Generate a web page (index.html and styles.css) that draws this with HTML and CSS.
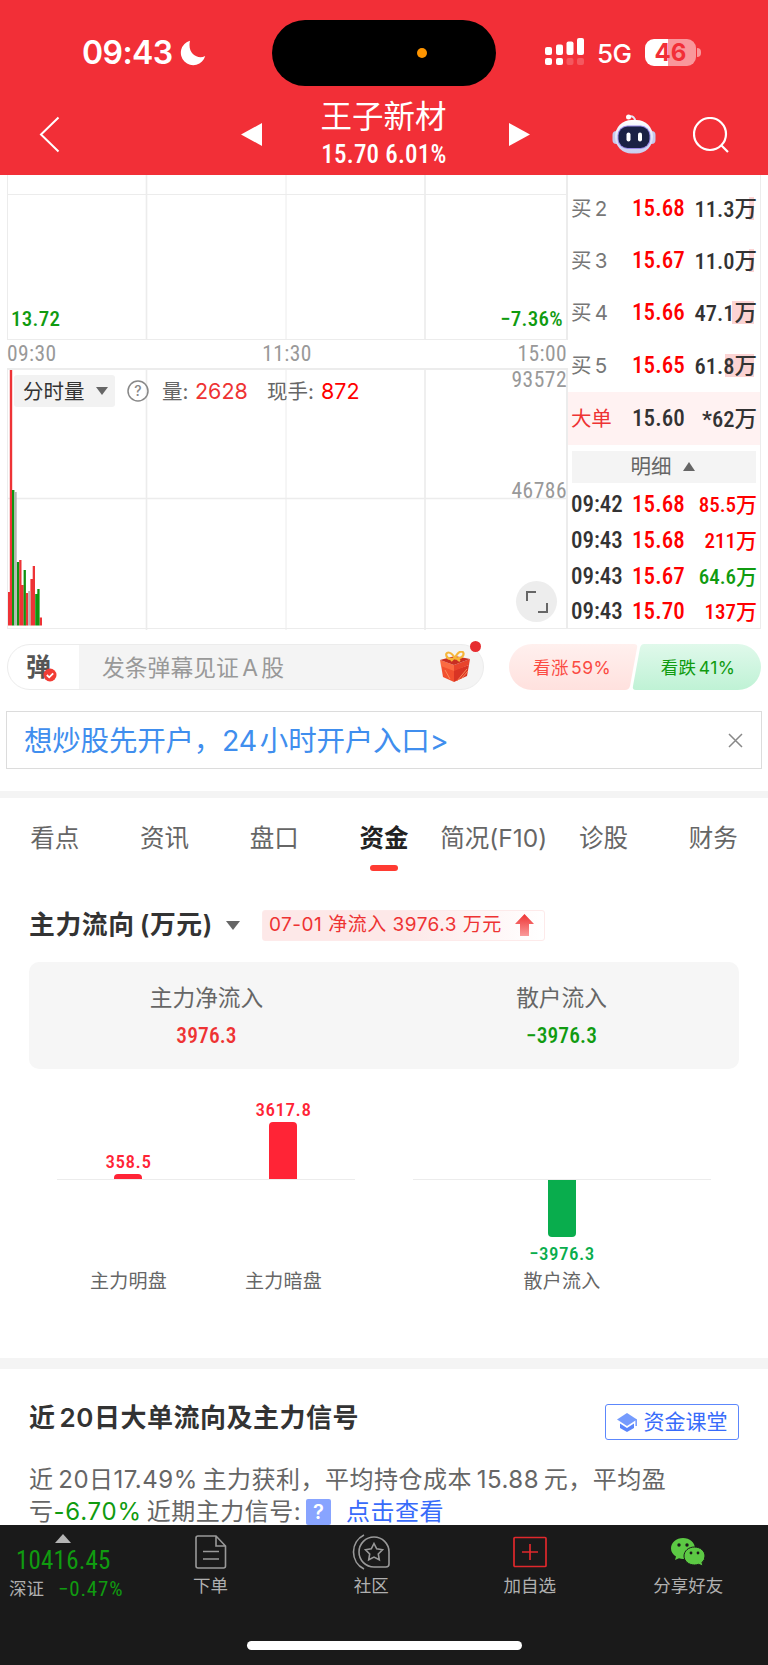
FILE: index.html
```html
<!DOCTYPE html>
<html lang="zh-CN">
<head>
  <meta charset="UTF-8">
  <meta name="viewport" content="width=device-width, initial-scale=1.0">
  <title>王子新材</title>
  <link rel="stylesheet" href="styles.css">
</head>
<body>
  <div class="app">
    <!-- Header -->
    <header class="header">
      <div class="status-bar">
        <div class="status-left">
          <span class="clock">09:43</span>
          <svg class="moon" width="26" height="26" viewBox="0 0 26 26"><path d="M10 .8A12.4 12.4 0 1 0 25.2 16C18 20 7 14 10 .8z" fill="#fff"/></svg>
        </div>
        <div class="island"><span class="island-dot"></span></div>
        <div class="status-right">
          <svg width="40" height="28" viewBox="0 0 40 28" fill="#fff">
            <rect x="0" y="9" width="7" height="8" rx="2"/><rect x="11" y="6.500" width="7" height="10.500" rx="2"/>
            <rect x="21.500" y="3.500" width="7" height="13.500" rx="2"/><rect x="32" y="0" width="7" height="17" rx="2"/>
            <rect x="0" y="20" width="7" height="7" rx="2"/><rect x="11" y="20" width="7" height="7" rx="2"/>
            <rect x="21.500" y="20" width="7" height="7" rx="2" opacity=".2"/><rect x="32" y="20" width="7" height="7" rx="2" opacity=".2"/>
          </svg>
          <span class="network">5G</span>
          <div class="battery">46</div>
          <span class="battery-nub"></span>
        </div>
      </div>
      <div class="nav-bar">
        <svg class="back" width="21" height="37" viewBox="0 0 21 37"><path d="M19.500 1.500L2 18.500l17.500 17" fill="none" stroke="#fff" stroke-width="2"/></svg>
        <svg class="prev" width="21" height="23" viewBox="0 0 21 23"><path d="M21 0v23L0 11.500z" fill="#fff"/></svg>
        <div class="stock">
          <div class="stock-name">王子新材</div>
          <div class="stock-price">15.70 6.01%</div>
        </div>
        <svg class="next" width="21" height="23" viewBox="0 0 21 23"><path d="M0 0v23l21-11.500z" fill="#fff"/></svg>
        <svg class="robot" width="44" height="40" viewBox="0 0 44 40">
          <defs><linearGradient id="shell" x2="0" y2="1"><stop stop-color="#fff"/><stop offset="1" stop-color="#c9cdef"/></linearGradient></defs>
          <path d="M17 2.500q6-1 6 5" fill="none" stroke="#e3e6f5" stroke-width="2"/>
          <circle cx="16.500" cy="3" r="2.500" fill="#fff"/>
          <rect x="0.500" y="17" width="8" height="13" rx="4" fill="#c5c9ec"/><rect x="35.500" y="17" width="8" height="13" rx="4" fill="#c5c9ec"/>
          <rect x="3" y="6" width="38" height="33.500" rx="16.500" fill="url(#shell)"/>
          <rect x="5.500" y="11.500" width="33" height="23.500" rx="10" fill="#9a8be8"/>
          <rect x="6.500" y="12.500" width="31" height="21.500" rx="9" fill="#1b2144"/>
          <rect x="14.500" y="18.500" width="4" height="9" rx="2" fill="#fff"/><rect x="26" y="18.500" width="4" height="9" rx="2" fill="#fff"/>
        </svg>
        <svg class="search" width="36" height="36" viewBox="0 0 36 36" fill="none" stroke="#fff" stroke-width="2.200"><circle cx="17" cy="17" r="16"/><path d="M28 28l7 7"/></svg>
      </div>
    </header>

    <!-- Chart and order book -->
    <section class="market">
      <div class="charts">
        <div class="price-chart">
          <svg class="grid" width="561" height="165" viewBox="0 0 561 165" fill="none" stroke="#ececec">
            <path d="M139.500 0v165M418 0v165" stroke-width="1.600"/><path d="M279 0v165M0 19.500h561"/>
          </svg>
          <span class="num low">13.72</span>
          <span class="num low">−7.36%</span>
        </div>
        <div class="time-axis num"><span>09:30</span><span>11:30</span><span>15:00</span></div>
        <div class="volume-chart">
          <svg class="grid" width="561" height="260" viewBox="0 0 561 260" fill="none" stroke="#ececec">
            <path d="M139.500 0v260M418 0v260M0 128.500h561" stroke-width="1.600"/><path d="M279 0v260"/>
            <g stroke="none" fill="#ee3336">
              <path d="M1 222h2v33.500H1zM2.800 0h2.400v255.500H2.800zM12.200 190h2.300v65.500h-2.300zM14.400 215h2.300v40.500h-2.300zM18.700 223h2.500v32.500h-2.500zM23.400 209h2.300v46.500h-2.300zM25.700 196h2.300v59.500h-2.300zM32.600 247.500h2.400v8h-2.400z"/>
              <path fill="#109410" d="M5 120h2.400v135.500H5zM9.700 192h2.400v63.500H9.700zM16.600 200h2.300v55.500h-2.300zM28.200 224h2.200v31.500h-2.200zM30.300 219h2.300v36.500h-2.300z"/>
              <path fill="#b5b5b5" d="M7.400 122h2.300v133.500H7.400zM21.200 221h2.200v34.500h-2.200z"/>
            </g>
          </svg>
          <div class="indicator">
            <span class="indicator-select">分时量<svg width="12" height="8" viewBox="0 0 12 8"><path d="M0 0h12L6 8z" fill="#666"/></svg></span>
            <svg class="help" width="22" height="22" viewBox="0 0 22 22"><circle cx="11" cy="11" r="10" fill="none" stroke="#888" stroke-width="1.500"/><text x="11" y="16" text-anchor="middle">?</text></svg>
            <span class="ind-label">量:</span><span class="ind-value vol">2628</span>
            <span class="ind-label">现手:</span><span class="ind-value hand">872</span>
          </div>
          <span class="num axis-max">93572</span>
          <span class="num axis-mid">46786</span>
          <span class="expand"><svg width="22" height="22" viewBox="0 0 22 22" fill="none" stroke="#666" stroke-width="2"><path d="M1 10V1h9M21 12v9h-9"/></svg></span>
        </div>
      </div>
      <div class="book">
        <div class="bid"><span>买 2</span><b class="num">15.68</b><i class="num d1">11.3万</i></div>
        <div class="bid"><span>买 3</span><b class="num">15.67</b><i class="num d1">11.0万</i></div>
        <div class="bid"><span>买 4</span><b class="num">15.66</b><i class="num d4">47.1万</i></div>
        <div class="bid"><span>买 5</span><b class="num">15.65</b><i class="num d5">61.8万</i></div>
        <div class="bid big"><span>大单</span><b class="num">15.60</b><i class="num">*62万</i></div>
        <div class="detail-toggle">明细<svg width="12" height="9" viewBox="0 0 12 9"><path d="M0 9h12L6 0z" fill="#666"/></svg></div>
        <div class="trade num"><span>09:42</span><b>15.68</b><i>85.5万</i></div>
        <div class="trade num"><span>09:43</span><b>15.68</b><i>211万</i></div>
        <div class="trade num"><span>09:43</span><b>15.67</b><i class="down">64.6万</i></div>
        <div class="trade num"><span>09:43</span><b>15.70</b><i>137万</i></div>
      </div>
    </section>

    <!-- Comment bar -->
    <section class="comment-row">
      <div class="comment-box">
        <div class="danmu">弹<svg class="danmu-check" width="14" height="14" viewBox="0 0 14 14"><circle cx="7" cy="7" r="6.500" fill="#f23c34"/><path d="M3.800 7l2.400 2.300 4-4" fill="none" stroke="#fff" stroke-width="1.800"/></svg></div>
        <span class="comment-hint">发条弹幕见证 A 股</span>
        <svg class="gift" width="30" height="31" viewBox="0 0 30 31">
          <path d="M1 14l13 5v12L3 26z" fill="#f2502f"/><path d="M29 14l-15 5v12l13-6z" fill="#d93424"/>
          <path d="M0 9l14 5v6L1 15z" fill="#fb6b42"/><path d="M30 8l-16 6v6l15-6z" fill="#e8442c"/>
          <path d="M0 9l15-4 15 3-16 6z" fill="#c92e22"/>
          <path d="M17 30l10-12M21 28l7-8M5 19l5 9" stroke="#fa8a5a" stroke-width="1"/>
          <path d="M15 7C10-1 5 1 6.500 5s5 3 8.500 2c4 1 9-1 8.500-4.500S18 0 15 7zm-1 0l-3 3m5-3l4 3" fill="none" stroke="#f6b53a" stroke-width="2.200"/>
        </svg>
        <span class="red-dot"></span>
      </div>
      <div class="sentiment">
        <svg class="sentiment-bg" width="252" height="46" viewBox="0 0 252 46">
          <defs>
            <linearGradient id="up" x2="0" y2="1"><stop stop-color="#fff0ee"/><stop offset="1" stop-color="#ffe1de"/></linearGradient>
            <linearGradient id="down" x2="0" y2="1"><stop stop-color="#e0f9eb"/><stop offset="1" stop-color="#bff2d5"/></linearGradient>
          </defs>
          <path d="M23 0h102q4 0 3 4l-7 38q-1 4-5 4H23a23 23 0 0 1 0-46z" fill="url(#up)"/>
          <path d="M135 0h94a23 23 0 0 1 0 46H127q-4 0-3-4l7-38q1-4 4-4z" fill="url(#down)"/>
        </svg>
        <span class="bull">看涨 59%</span><span class="bear">看跌 41%</span>
      </div>
    </section>

    <div class="promo">
      <span>想炒股先开户，24 小时开户入口&gt;</span>
      <svg width="15" height="15" viewBox="0 0 15 15"><path d="M1 1l13 13M14 1L1 14" stroke="#888" stroke-width="1.500"/></svg>
    </div>

    <!-- Tabs -->
    <nav class="tabs">
      <span>看点</span><span>资讯</span><span>盘口</span><span class="active">资金</span><span>简况(F10)</span><span>诊股</span><span>财务</span>
    </nav>

    <!-- Main capital flow -->
    <section class="flow">
      <div class="flow-head">
        <h2>主力流向 (万元)</h2>
        <svg width="14" height="9" viewBox="0 0 14 9"><path d="M0 0h14L7 9z" fill="#666"/></svg>
        <span class="flow-badge">07-01 净流入 3976.3 万元
          <svg width="19" height="22" viewBox="0 0 19 22"><defs><linearGradient id="arrow" x2="0" y2="1"><stop stop-color="#ee3333"/><stop offset="1" stop-color="#f99a9a"/></linearGradient></defs><path d="M9.500 0L19 10h-5v12H5V10H0z" fill="url(#arrow)"/></svg>
        </span>
      </div>
      <div class="flow-card">
        <div><p>主力净流入</p><b class="num up">3976.3</b></div>
        <div><p>散户流入</p><b class="num down">−3976.3</b></div>
      </div>
      <div class="flow-chart">
        <div class="plot">
          <div class="col">
            <div class="above"><span class="num">358.5</span><div class="bar" style="height: 5px"></div></div>
            <div class="below"></div><p>主力明盘</p>
          </div>
          <div class="col">
            <div class="above"><span class="num">3617.8</span><div class="bar" style="height: 57px"></div></div>
            <div class="below"></div><p>主力暗盘</p>
          </div>
        </div>
        <div class="plot">
          <div class="col">
            <div class="above"></div>
            <div class="below"><div class="bar" style="height: 57px"></div><span class="num">−3976.3</span></div><p>散户流入</p>
          </div>
        </div>
      </div>
    </section>

    <!-- 20 day signal -->
    <section class="signal">
      <div class="signal-head">
        <h2>近 20日大单流向及主力信号</h2>
        <a class="course"><svg width="20" height="19" viewBox="0 0 20 19" fill="#5b86fb"><path d="M10 0l10 6.500L10 13 0 6.500z" fill="#759bfd"/><path d="M3 10.500l7 4.500 7-4.500v4.500l-7 4-7-4z"/><path d="M18.500 6.500h1.300V13h-1.300z"/></svg>资金课堂</a>
      </div>
      <p class="signal-text">近 20日17.49% 主力获利，平均持仓成本 15.88 元，平均盈<br>亏<em>-6.70%</em> 近期主力信号:<span class="tip">?</span><a>点击查看</a></p>
    </section>

    <!-- Bottom bar -->
    <footer class="bottom">
      <div class="bottom-items">
        <div class="index">
          <svg width="16" height="9" viewBox="0 0 16 9"><path d="M8 0l8 9H0z" fill="#b5b5b5"/></svg>
          <b class="num">10416.45</b>
          <div class="index-sub"><span>深证</span><i class="num">−0.47%</i></div>
        </div>
        <div class="item order">
          <svg width="32" height="34" viewBox="0 0 32 34" fill="none" stroke="#999" stroke-width="1.600"><path d="M3 1h18l9.500 10v20q0 2-2 2H3q-2 0-2-2V3q0-2 2-2zM21 1v10h9.500M8 16.500h16M8 24h16"/></svg>
          <span>下单</span>
        </div>
        <div class="item group">
          <svg width="38" height="36" viewBox="0 0 38 36" fill="none" stroke="#999" stroke-width="1.600"><path d="M22 33A15 15 0 1 1 37 18v12q0 3-3 3zM12 1a19 19 0 0 0 0 34"/><path d="M22 9.500l2.700 5.300 5.800.9-4.200 4.200 1 5.900-5.300-2.700-5.300 2.700 1-5.900-4.200-4.200 5.800-.9z"/></svg>
          <span>社区</span>
        </div>
        <div class="item watch">
          <svg width="34" height="31" viewBox="0 0 34 31" fill="none" stroke="#e0282c" stroke-width="1.700"><rect x="1" y="1" width="32" height="29" rx="1"/><path d="M9 15.500h16M17 7.500v16"/></svg>
          <span>加自选</span>
        </div>
        <div class="item share">
          <svg width="34" height="28" viewBox="0 0 34 28">
            <path d="M12 0c6.600 0 12 4.500 12 10.500S18.600 21 12 21q-2 0-4-.7L4 22l1-3.500C2 16.500 0 14 0 10.500 0 4.500 5.400 0 12 0z" fill="#5cc944"/>
            <path d="M23.500 9C29.500 9 34 13 34 18q0 4-3 6.500l1 3.500-4.500-1.700q-2 .7-4 .7c-6 0-10.500-4-10.500-9s4.500-9 10.500-9z" fill="#5cc944" stroke="#1a1a1a" stroke-width="1"/>
            <g fill="#1a1a1a"><circle cx="8" cy="7" r="1.700"/><circle cx="16" cy="7" r="1.700"/><circle cx="20" cy="15" r="1.400"/><circle cx="27" cy="15" r="1.400"/></g>
          </svg>
          <span>分享好友</span>
        </div>
      </div>
      <div class="home-indicator"></div>
    </footer>
  </div>
</body>
</html>
```
FILE: styles.css
```css
* { box-sizing: border-box; }
body {
  margin: 0;
  background: #fff;
  font-family: Inter, "Noto Sans CJK SC", sans-serif;
  color: #333;
  font-weight: 400;
}
p, h2 { margin: 0; }
i, em { font-style: normal; }
svg { display: block; flex-shrink: 0; }
.app {
  width: 768px;
  height: 1665px;
  overflow: hidden;
  display: flex;
  flex-direction: column;
}
.num {
  font-family: Roboto, "Noto Sans CJK SC", sans-serif;
  font-stretch: 87%;
  font-weight: 500;
  white-space: nowrap;
}
.up { color: #ee3333; }
.down { color: #109b10; }

/* Header */
.header { height: 175px; background: #f22f37; color: #fff; }
.status-bar {
  height: 86px;
  padding: 20px 66px 0 82px;
  display: flex;
  align-items: flex-start;
}
.status-left { width: 190px; height: 66px; display: flex; align-items: center; }
.clock { font-size: 32px; font-weight: 600; line-height: 66px; width: 98px; letter-spacing: -.6px; }
.island {
  width: 224px;
  height: 66px;
  border-radius: 33px;
  background: #000;
  display: flex;
  align-items: center;
  justify-content: flex-end;
  padding-right: 69px;
}
.island-dot { width: 10px; height: 10px; border-radius: 50%; background: #ff9500; }
.status-right { display: flex; align-items: center; height: 64px; padding-left: 49px; }
.network { font-size: 26px; line-height: 62px; width: 48px; margin: 3px 0 0 12px; letter-spacing: -.5px; font-weight: 500; }
.battery {
  width: 51px;
  height: 27px;
  border-radius: 9px;
  background: linear-gradient(90deg, #fff 46%, #f9979b 46%);
  color: #f22f37;
  font-size: 24px;
  font-weight: 700;
  line-height: 28px;
  text-align: center;
}
.battery-nub { width: 4px; height: 9px; margin-left: 1px; background: #f9979b; border-radius: 0 5px 5px 0; }
.nav-bar { height: 89px; padding: 0 39px; display: flex; align-items: flex-start; }
.back { margin-top: 30px; }
.prev { margin: 37px 0 0 181px; }
.stock { width: 249px; text-align: center; padding-top: 10px; }
.stock-name { font-size: 31.500px; line-height: 42px; font-weight: 400; margin-right: 3px; }
.stock-price {
  font-family: Roboto, sans-serif;
  font-stretch: 87%;
  font-size: 25px;
  font-weight: 500;
  line-height: 34px;
  letter-spacing: .2px;
  margin-right: 2px;
}
.next { margin: 37px 0 0 1px; }
.robot { margin: 28px 0 0 82px; }
.search { margin: 31px 0 0 37px; }

/* Market area */
.market { height: 455px; display: flex; padding-left: 7px; }
.charts { width: 561px; }
.price-chart {
  height: 165px;
  position: relative;
  display: flex;
  justify-content: space-between;
  align-items: flex-end;
  padding: 0 3px 7px 3px;
  border: solid #ececec;
  border-width: 0 2px 1.500px 1px;
}
.grid { position: absolute; left: -1px; top: 0; }
.low { position: relative; color: #109b10; font-size: 21px; line-height: 25px; letter-spacing: .3px; }
.time-axis {
  height: 28px;
  display: flex;
  justify-content: space-between;
  color: #999;
  font-size: 21.500px;
  line-height: 27px;
  font-weight: 400;
  letter-spacing: .4px;
  padding-right: 1px;
}
.volume-chart {
  height: 261px;
  position: relative;
  border: solid #ececec;
  border-width: 2px 2px 1.500px 1px;
}
.indicator {
  position: relative;
  display: flex;
  align-items: center;
  height: 32px;
  margin: 5px 0 0 6px;
  font-size: 20.500px;
  line-height: 33px;
}
.indicator-select {
  width: 101px;
  height: 32px;
  padding-left: 9px;
  display: flex;
  align-items: center;
  gap: 11px;
  background: #f2f2f2;
  border-radius: 3px;
}
.help { margin: 0 13px 0 12px; }
.help text { font: 500 14px Inter, sans-serif; fill: #888; }
.ind-label { color: #666; width: 33px; }
.ind-value { color: #ee3333; width: 72px; font-size: 21.500px; }
.ind-value.vol + .ind-label { width: 54px; }
.ind-value.hand { color: #f00; }
.axis-max, .axis-mid {
  position: absolute;
  right: -1px;
  color: #999;
  font-size: 21.500px;
  line-height: 24px;
  font-weight: 400;
  letter-spacing: .5px;
}
.axis-max { top: -2px; }
.axis-mid { top: 109px; }
.expand {
  position: absolute;
  right: 9px;
  bottom: 6px;
  width: 41px;
  height: 41px;
  border-radius: 50%;
  background: #ededed;
  display: flex;
  align-items: center;
  justify-content: center;
}
.book { width: 193px; border: solid #ececec; border-width: 0 1px 1.500px 0; padding-top: 7px; height: 454px; }
.bid {
  height: 52.400px;
  display: flex;
  align-items: center;
  padding: 1px 3px 0 3px;
  font-size: 20px;
  line-height: 26px;
}
.bid span { width: 61px; color: #777; font-size: 20.500px; letter-spacing: -.3px; word-spacing: -2px; }
.bid b, .trade b { color: #f00; font-size: 23px; width: 55px; font-weight: 500; letter-spacing: .1px; }
.bid i, .trade i { flex: 1; text-align: right; font-size: 22.500px; }
.bid i { background: linear-gradient(#fbd3d3, #fbd3d3) no-repeat; background-position: calc(100% - 3px) 1px; background-size: 0 23px; }
.bid i.d1 { background-size: 5px 23px; }
.bid i.d4 { background-size: 22px 23px; }
.bid i.d5 { background-size: 29px 23px; }
.bid.big { background: #fff2f2; height: 53px; }
.bid.big span { color: #ee3333; }
.bid.big b { color: #333; }
.detail-toggle {
  height: 32px;
  margin: 6px 4px 5px;
  background: #f4f4f4;
  color: #666;
  font-size: 20.500px;
  line-height: 33px;
  display: flex;
  align-items: center;
  justify-content: center;
  gap: 11px;
  padding-right: 3px;
}
.trade { height: 35.700px; display: flex; align-items: center; padding: 0 3px; line-height: 30px; }
.trade span { width: 61px; font-size: 23px; }
.trade i { color: #f00; font-size: 21px; }
.trade i.down { color: #109b10; }

/* Comment row */
.comment-row { height: 60px; margin-top: 14px; padding: 0 7px; display: flex; justify-content: space-between; }
.comment-box {
  position: relative;
  width: 477px;
  height: 46px;
  border: 1.500px solid #ececec;
  border-radius: 23px;
  background: linear-gradient(90deg, #fff 71px, #f4f4f4 71px);
  display: flex;
  align-items: center;
}
.danmu { position: relative; padding-left: 18px; width: 94px; font-size: 25px; line-height: 42px; font-weight: 700; color: #555; }
.danmu-check { position: absolute; left: 35px; top: 22px; }
.comment-hint { width: 338px; font-size: 22.800px; line-height: 43px; color: #999; word-spacing: -3px; }
.gift { margin-top: -2px; }
.red-dot {
  position: absolute;
  right: 2px;
  top: -4px;
  width: 11px;
  height: 11px;
  border-radius: 50%;
  background: #e62d30;
}
.sentiment { position: relative; width: 252px; height: 46px; display: flex; font-size: 17.500px; line-height: 47px; letter-spacing: .4px; word-spacing: -3px; }
.sentiment-bg { position: absolute; left: 0; top: 0; }
.sentiment span { position: relative; width: 126px; text-align: center; }
.bull { color: #fb4a42; }
.bear { color: #109b10; }
.promo {
  height: 58px;
  margin: 7px 6px 0 6px;
  border: 1.500px solid #dcdcdc;
  display: flex;
  align-items: center;
  justify-content: space-between;
  padding: 0 18px 0 17px;
  font-size: 28.500px;
  line-height: 55px;
  color: #408eee;
  letter-spacing: -.2px;
  word-spacing: -5px;
}

/* Tabs */
.tabs {
  height: 103px;
  margin-top: 22px;
  border-top: 7px solid #f4f4f4;
  display: grid;
  grid-template-columns: repeat(7, 1fr);
  justify-items: center;
  font-size: 24.500px;
  line-height: 34px;
  color: #666;
  padding-top: 23px;
  white-space: nowrap;
}
.tabs .active { color: #222; font-weight: 600; }
.tabs .active::after {
  content: "";
  display: block;
  width: 28px;
  height: 6px;
  margin: 10px auto 0;
  border-radius: 3px;
  background: #ff3b32;
}

/* Flow */
.flow { padding: 15px 29px 0; height: 464px; }
.flow-head { height: 32px; display: flex; align-items: center; }
h2 { font-size: 26px; font-weight: 600; line-height: 32px; color: #333; white-space: nowrap; }
.flow-head h2 { width: 197px; font-size: 25.800px; letter-spacing: .6px; word-spacing: -2px; }
.flow-badge {
  width: 283px;
  height: 31px;
  margin-left: 22px;
  padding: 0 10px 0 6px;
  display: flex;
  align-items: center;
  justify-content: space-between;
  border: 1px solid #fdeaea;
  border-radius: 3px;
  background: linear-gradient(90deg, #fde8e8 50%, #fff);
  color: #ee3333;
  font-size: 19px;
  line-height: 28px;
  letter-spacing: .5px;
  white-space: nowrap;
}
.flow-card {
  height: 107px;
  margin-top: 21px;
  border-radius: 10px;
  background: #f6f6f6;
  display: flex;
  text-align: center;
}
.flow-card div { flex: 1; padding-top: 20px; }
.flow-card p { font-size: 22.700px; line-height: 32px; color: #666; }
.flow-card b { display: block; font-size: 21.500px; line-height: 28px; margin-top: 8px; letter-spacing: .1px; }
.flow-chart { display: flex; gap: 58px; padding: 0 28px; margin-top: 10px; }
.plot { flex: 1; display: flex; justify-content: center; gap: 71px; position: relative; }
.plot::before { content: ""; position: absolute; left: 0; right: 0; top: 100px; height: 1px; background: #ececec; }
.col { width: 84px; display: flex; flex-direction: column; align-items: center; }
.col:first-child:last-child { width: 298px; }
.above, .below { display: flex; flex-direction: column; align-items: center; position: relative; }
.above { height: 100px; justify-content: flex-end; color: #ff2436; }
.below { height: 89px; color: #09ad4d; }
.above .num, .below .num { font-size: 19px; line-height: 24px; letter-spacing: .5px; }
.bar { width: 28px; background: #ff2436; border-radius: 4px 4px 0 0; }
.below .bar { background: #09ad4d; border-radius: 0 0 4px 4px; margin-top: 1px; }
.below .num { margin-top: 5px; }
.col p { font-size: 19px; line-height: 28px; color: #666; white-space: nowrap; letter-spacing: .2px; }

/* Signal */
.signal { height: 167px; border-top: 11px solid #f4f4f4; padding: 36px 29px 0; }
.signal-head { height: 36px; display: flex; justify-content: space-between; }
.signal-head h2 { line-height: 26px; letter-spacing: .5px; word-spacing: -3px; }
.course {
  width: 134px;
  height: 36px;
  margin-top: -1px;
  border: 1.500px solid #5c87fc;
  border-radius: 3px;
  color: #386bfa;
  font-size: 21px;
  line-height: 32px;
  display: flex;
  align-items: center;
  justify-content: center;
  gap: 7px;
}
.signal-text { margin-top: 23px; font-size: 24px; line-height: 32px; color: #666; white-space: nowrap; letter-spacing: .5px; word-spacing: -2.500px; }
.signal-text em { color: #109b10; letter-spacing: .8px; }
.signal-text a { color: #386bfa; }
.tip {
  display: inline-block;
  width: 25px;
  height: 26px;
  margin: 0 15px 0 5px;
  border-radius: 2px;
  background: #88a4ff;
  color: #fff;
  font-size: 20px;
  font-weight: 600;
  line-height: 26px;
  text-align: center;
  vertical-align: 1px;
}

/* Bottom bar */
.bottom { flex: 1; background: #1a1a1a; color: #b0b0b0; display: flex; flex-direction: column; align-items: center; }
.bottom-items { width: 100%; height: 116px; display: flex; }
.index { width: 129px; padding: 9px 0 0 9px; }
.index > svg { margin-left: 46px; }
.index b { display: block; margin-left: 7px; font-size: 25px; line-height: 35px; color: #109b10; font-weight: 400; letter-spacing: .2px; }
.index-sub { display: flex; font-size: 17.500px; line-height: 22px; gap: 14px; }
.index-sub i { color: #109b10; font-size: 21px; font-weight: 400; letter-spacing: .8px; }
.item { width: 158.500px; display: flex; flex-direction: column; align-items: center; font-size: 17.500px; }
.item.order { width: 163px; }
.item svg { height: 36px; margin-top: 9px; }
.item span { line-height: 24px; margin-top: 4px; }
.home-indicator { width: 275px; height: 9px; border-radius: 5px; background: #fff; }
```
